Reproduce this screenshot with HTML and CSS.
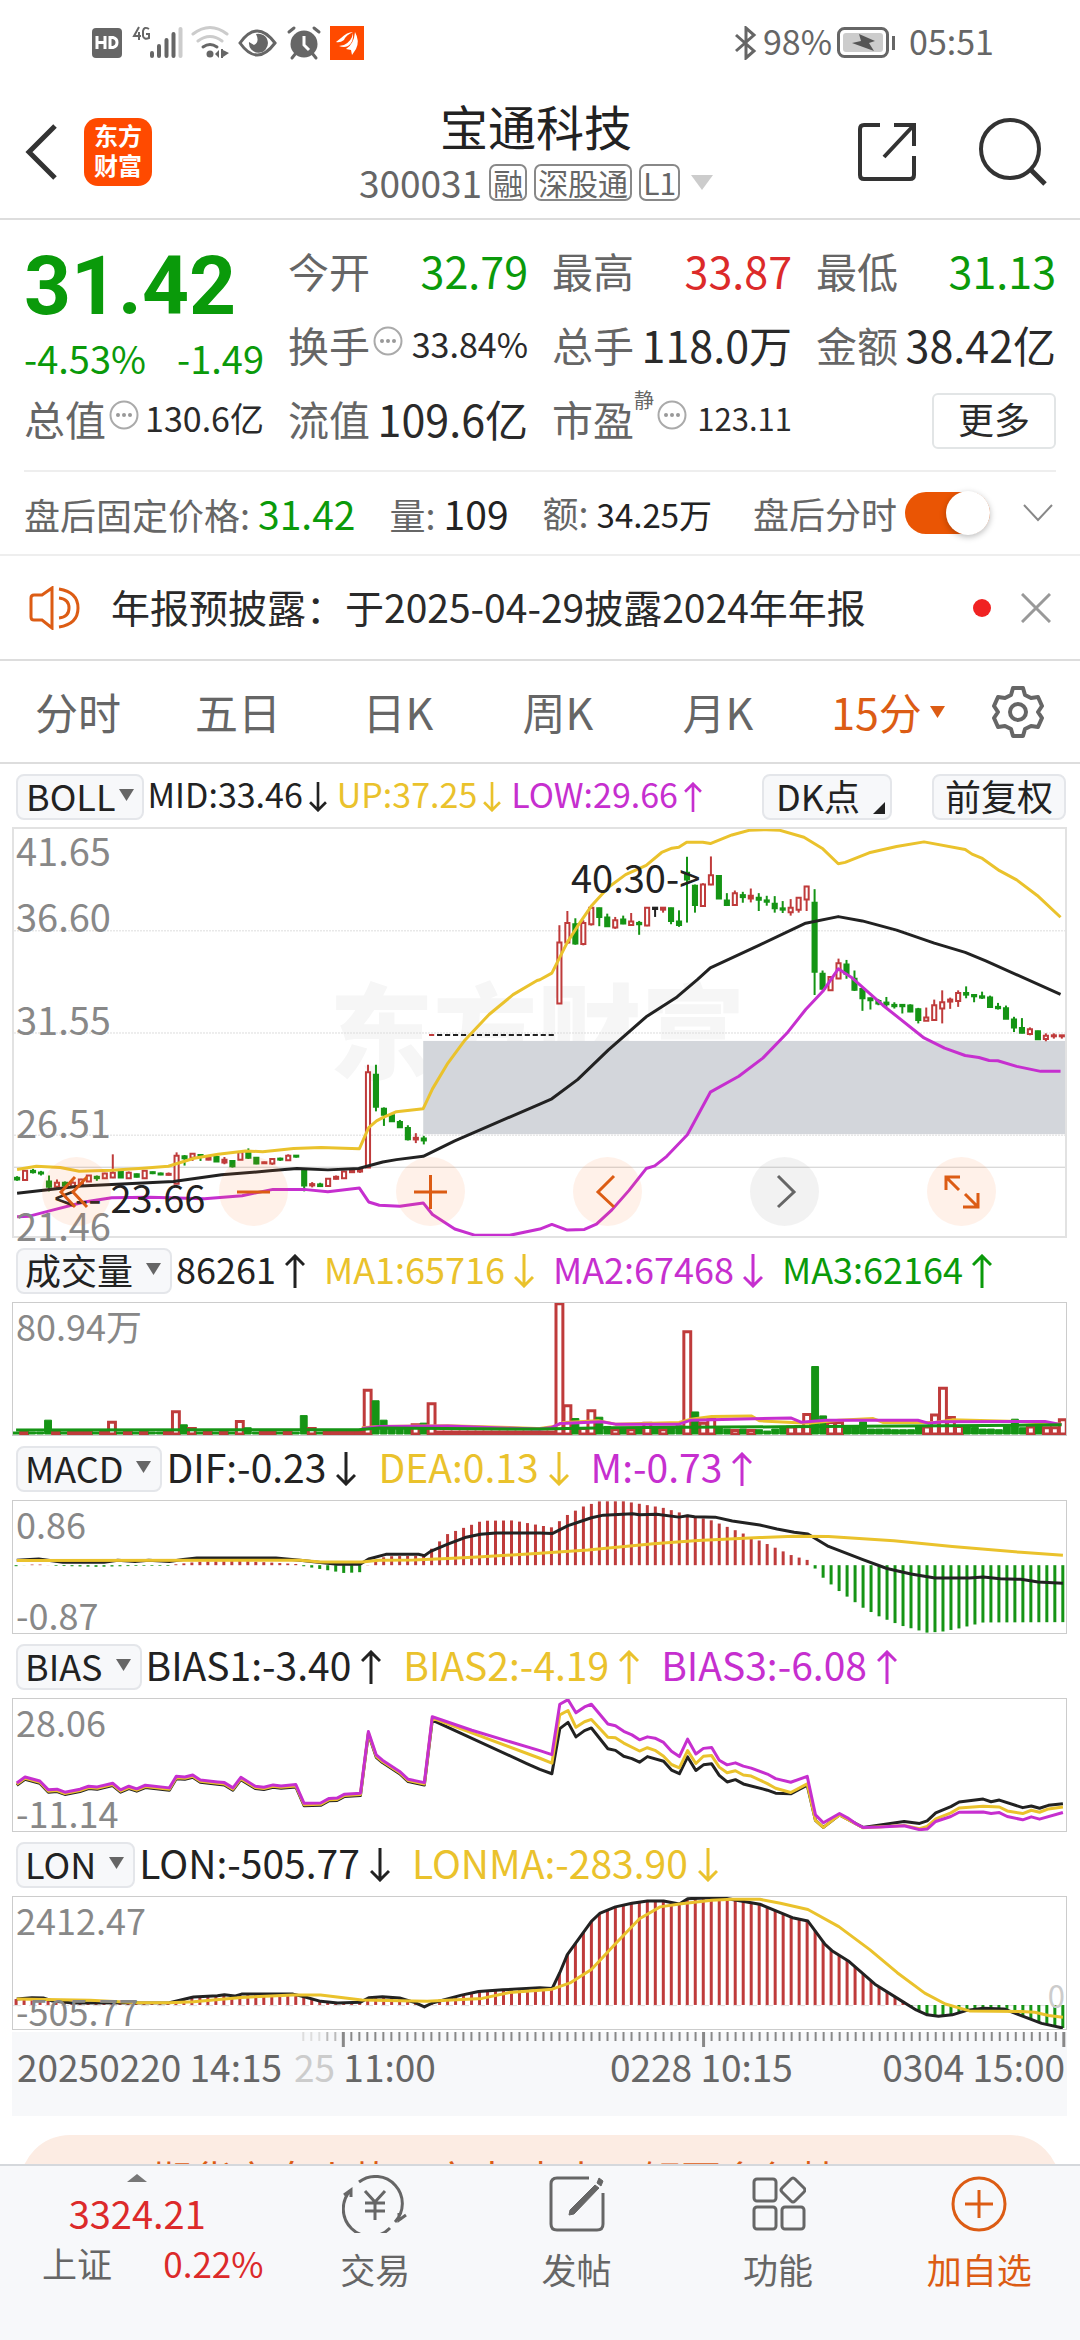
FILE: index.html
```html
<!DOCTYPE html>
<html lang="zh-CN">
<head>
<meta charset="utf-8">
<meta name="viewport" content="width=device-width">
<title>宝通科技 300031</title>
<link rel="stylesheet" href="styles.css">
</head>
<body>
<div class="status">
  <svg class="status-icons" width="274" height="36" viewBox="0 0 274 36" fill="#666">
    <rect x="0" y="3" width="30" height="30" rx="4"/>
    <path d="M5 11v13M13 11v13M5 17.500h8M18 12.500v10h3q4-1 4-5t-4-5z" fill="none" stroke="#fff" stroke-width="3"/>
    <path d="M47 2l-5 9h7M47 7v8M57 4q-5-3-6 2v5q1 4 6 2v-4h-3" fill="none" stroke="#666" stroke-width="2"/>
    <path d="M60 28v3M67 21v10M74.500 15v16M81.500 9v22" stroke="#666" stroke-width="4" stroke-linecap="round"/>
    <path d="M88.500 4v27" stroke="#ccc" stroke-width="4" stroke-linecap="round"/>
    <g fill="none" stroke-width="3" stroke-linecap="round"><path d="M101 9q17-13 34 0M106 16q12-9 24 0" stroke="#ccc"/><path d="M111 22q7-5 14 0" stroke="#666"/></g>
    <circle cx="118" cy="29" r="3.500"/><path d="M123 29l4-4v8zM131 25l6 3-6 4zM129 24h2v9h-2z"/>
    <path d="M148 18q17-24 35 0q-18 24-35 0z" fill="none" stroke="#666" stroke-width="3"/><path d="M164 9a9.500 9.500 0 1 1-7 8l5 3q6-3 2-11z"/>
    <circle cx="212" cy="19" r="13.500"/><path d="M212 11v9l5 5" stroke="#fff" stroke-width="3" fill="none"/><path d="M197 7l5-4M227 7l-5-4M200 33l4-5M224 33l-4-5" stroke="#666" stroke-width="3" stroke-linecap="round"/>
    <rect x="238" y="1" width="34" height="34" fill="#ff4a00"/>
    <path d="M244 17l5-4q6-6 12-6-7 3-9 8-4 3-8 2zM247 21l5-1q8-4 9-12 1 9-5 13-4 2-9 0zM254 24q8-5 9-17 5 9 1 17l-4 6-1-5z" fill="#fff"/>
  </svg>
  <div class="status-right">
    <svg width="24" height="34" viewBox="0 0 24 34" fill="none" stroke="#666" stroke-width="3"><path d="M2 9l18 16-8 7V2l8 7L2 25"/></svg>
    <span>98%</span>
    <svg width="60" height="32" viewBox="0 0 60 32"><rect x="1.500" y="1.500" width="49" height="28" rx="6" fill="none" stroke="#666" stroke-width="3"/><rect x="6" y="6" width="40" height="19" rx="3" fill="#ccc"/><path d="M22 7l16 7-6 2 5 8-22-8 9-2z" fill="#555"/><path d="M56.500 9v14" stroke="#666" stroke-width="3"/></svg>
    <span class="clock">05:51</span>
  </div>
</div>

<header class="header">
  <div class="header-left">
    <button class="icon-btn" aria-label="返回"><svg width="34" height="58" viewBox="0 0 34 58" fill="none" stroke="#333" stroke-width="5"><path d="M31 3L5 29l26 26"/></svg></button>
    <a class="logo" href="#"><span>东方</span><span>财富</span></a>
  </div>
  <div class="title">
    <h1>宝通科技</h1>
    <div class="code"><span>300031</span><span class="tag">融</span><span class="tag">深股通</span><span class="tag">L1</span><svg width="22" height="15" viewBox="0 0 22 15"><path d="M0 0h22L11 15z" fill="#ccc"/></svg></div>
  </div>
  <div class="header-actions">
    <button class="icon-btn" aria-label="分享"><svg width="60" height="60" viewBox="0 0 60 60" fill="none" stroke="#333" stroke-width="4"><path d="M22 3H6q-4 0-4 4v46q0 4 4 4h46q4 0 4-4V34M36 3h20v21M56 3L26 35"/></svg></button>
    <button class="icon-btn" aria-label="搜索"><svg width="70" height="70" viewBox="0 0 70 70" fill="none" stroke="#333" stroke-width="4"><circle cx="32" cy="32" r="29"/><path d="M53 53l14 14" stroke-width="5"/></svg></button>
  </div>
</header>

<main class="main">
  <section class="quote">
    <div class="price-cell"><strong class="price">31.42</strong><div class="change"><span>-4.53%</span><span>-1.49</span></div></div>
    <div class="item"><span>今开</span><b class="down">32.79</b></div>
    <div class="item"><span>最高</span><b class="up">33.87</b></div>
    <div class="item"><span>最低</span><b class="down">31.13</b></div>
    <div class="item"><span>换手</span><svg class="more-dot" viewBox="0 0 30 30"><use href="#dots"/></svg><b class="small">33.84%</b></div>
    <div class="item"><span>总手</span><b>118.0万</b></div>
    <div class="item"><span>金额</span><b>38.42亿</b></div>
    <div class="item"><span>总值</span><svg class="more-dot" viewBox="0 0 30 30"><use href="#dots"/></svg><b class="small">130.6亿</b></div>
    <div class="item"><span>流值</span><b>109.6亿</b></div>
    <div class="item"><span>市盈</span><sup>静</sup><svg class="more-dot" viewBox="0 0 30 30"><use href="#dots"/></svg><b class="tiny">123.11</b></div>
    <div class="item item-end"><button class="more">更多</button></div>
  </section>

  <section class="after">
    <span class="pair">盘后固定价格: <b class="down">31.42</b></span>
    <span class="pair">量: <b>109</b></span>
    <span class="pair">额: <b class="small">34.25万</b></span>
    <label class="switch">盘后分时<input type="checkbox" role="switch" checked></label>
    <button class="icon-btn chevron" aria-label="展开"><svg width="30" height="18" viewBox="0 0 30 18" fill="none" stroke="#888" stroke-width="2"><path d="M1 1l14 15L29 1"/></svg></button>
  </section>

  <section class="notice">
    <svg width="52" height="44" viewBox="0 0 52 44" fill="none" stroke="#dc5c14" stroke-width="3"><path d="M2 12q0-3 3-3h8L23 2v40L13 34H5q-3 0-3-3zM30 3q19 3 19 19T30 41M30 12q10 1 10 10t-10 10"/></svg>
    <p>年报预披露：于2025-04-29披露2024年年报</p>
    <i class="dot"></i>
    <button class="icon-btn" aria-label="关闭"><svg width="30" height="30" viewBox="0 0 30 30" stroke="#999" stroke-width="3"><path d="M1 1l28 28M29 1L1 29"/></svg></button>
  </section>

  <nav class="tabs">
    <button>分时</button><button>五日</button><button>日K</button><button>周K</button><button>月K</button>
    <button class="active">15分<svg width="15" height="12" viewBox="0 0 15 12"><path d="M0 0h15L7.500 12z" fill="#dc5c14"/></svg></button>
    <button class="gear" aria-label="设置"><svg width="52" height="52" viewBox="0 0 52 52" fill="none" stroke="#666" stroke-width="4" stroke-linejoin="round"><path d="M21 2h10l2 7 6 3 7-1 4 9-4 6 4 6-4 9-7-1-6 3-2 7H21l-2-7-6-3-7 1-4-9 4-6-4-6 4-9 7 1 6-3z"/><circle cx="26" cy="26" r="8"/></svg></button>
  </nav>

  <div class="charts">
    <div class="bar bar-main">
      <button class="pick tight">BOLL<svg width="15" height="12" viewBox="0 0 15 12"><path d="M0 0h15L7.500 12z" fill="#666"/></svg></button>
      <span>MID:33.46</span><svg class="arrow"><use href="#dn"/></svg>
      <span class="y">UP:37.25</span><svg class="arrow y"><use href="#dn"/></svg>
      <span class="p">LOW:29.66</span><svg class="arrow p"><use href="#upa"/></svg>
      <button class="pick dk">DK点<svg width="12" height="12" viewBox="0 0 12 12"><path d="M12 0v12H0z" fill="#222"/></svg></button>
      <button class="pick adj">前复权</button>
    </div>
    <div class="plot plot-main">
      <span class="watermark">东方财富</span>
      <svg id="kline" viewBox="35 202 3064 1231" preserveAspectRatio="none"></svg>
      <div class="scale"><span>41.65</span><span>36.60</span><span>31.55</span><span>26.51</span><span>21.46</span></div>
      <span class="mark high">40.30-&gt;</span>
      <span class="mark low"><span>&lt;--</span><span>23.66</span></span>
      <div class="controls">
        <button aria-label="最左"><svg viewBox="0 0 69 69"><path d="M33 20L19 35l14 15M45 20L31 35l14 15"/></svg></button>
        <button aria-label="缩小"><svg viewBox="0 0 69 69"><path d="M18 35h33"/></svg></button>
        <button aria-label="放大"><svg viewBox="0 0 69 69"><path d="M18 35h33M34.500 18v34"/></svg></button>
        <button aria-label="左移"><svg viewBox="0 0 69 69"><path d="M41 19L25 35l16 15"/></svg></button>
        <button class="off" aria-label="右移"><svg viewBox="0 0 69 69"><path d="M28 19l16 16-16 15"/></svg></button>
        <button aria-label="全屏"><svg viewBox="0 0 69 69"><path d="M19 33V20h14M20 21l12 12M51 36v14H36M50 49L38 37"/></svg></button>
      </div>
    </div>

    <div class="bar bar-volume">
      <button class="pick">成交量<svg width="15" height="12" viewBox="0 0 15 12"><path d="M0 0h15L7.500 12z" fill="#666"/></svg></button>
      <span>86261</span><svg class="arrow"><use href="#upa"/></svg>
      <span class="y">MA1:65716</span><svg class="arrow y"><use href="#dn"/></svg>
      <span class="p">MA2:67468</span><svg class="arrow p"><use href="#dn"/></svg>
      <span class="g">MA3:62164</span><svg class="arrow g"><use href="#upa"/></svg>
    </div>
    <div class="plot"><svg id="volume" viewBox="35 187 3064 401" preserveAspectRatio="none"></svg><div class="scale"><span>80.94万</span></div></div>

    <div class="bar">
      <button class="pick">MACD<svg width="15" height="12" viewBox="0 0 15 12"><path d="M0 0h15L7.500 12z" fill="#666"/></svg></button>
      <span>DIF:-0.23</span><svg class="arrow"><use href="#dn"/></svg>
      <span class="y">DEA:0.13</span><svg class="arrow y"><use href="#dn"/></svg>
      <span class="p">M:-0.73</span><svg class="arrow p"><use href="#upa"/></svg>
    </div>
    <div class="plot"><svg id="macd" viewBox="35 782 3064 401" preserveAspectRatio="none"></svg><div class="scale"><span>0.86</span><span>-0.87</span></div></div>

    <div class="bar">
      <button class="pick">BIAS<svg width="15" height="12" viewBox="0 0 15 12"><path d="M0 0h15L7.500 12z" fill="#666"/></svg></button>
      <span>BIAS1:-3.40</span><svg class="arrow"><use href="#upa"/></svg>
      <span class="y">BIAS2:-4.19</span><svg class="arrow y"><use href="#upa"/></svg>
      <span class="p">BIAS3:-6.08</span><svg class="arrow p"><use href="#upa"/></svg>
    </div>
    <div class="plot"><svg id="bias" viewBox="35 176 3064 401" preserveAspectRatio="none"></svg><div class="scale"><span>28.06</span><span>-11.14</span></div></div>

    <div class="bar">
      <button class="pick">LON<svg width="15" height="12" viewBox="0 0 15 12"><path d="M0 0h15L7.500 12z" fill="#666"/></svg></button>
      <span>LON:-505.77</span><svg class="arrow"><use href="#dn"/></svg>
      <span class="y">LONMA:-283.90</span><svg class="arrow y"><use href="#dn"/></svg>
    </div>
    <div class="plot"><svg id="lon" viewBox="35 770 3064 401" preserveAspectRatio="none"></svg><div class="scale"><span>2412.47</span><span>-505.77</span></div><span class="zero">0</span></div>

    <div class="axis">
      <svg id="ticks" viewBox="35 0 3064 16" preserveAspectRatio="none"></svg>
      <div class="times"><span>20250220 14:15</span><span class="second"><i>25</i> 11:00</span><span class="third">0228 10:15</span><span class="last">0304 15:00</span></div>
    </div>
  </div>

  <a class="banner" href="#"><span>期货夜盘火热开启中 点击了解更多行情</span></a>
</main>

<nav class="dock">
  <a class="index" href="#">
    <svg width="20" height="8" viewBox="0 0 20 8"><path d="M0 8h20L10 0z" fill="#777"/></svg>
    <b>3324.21</b>
    <span class="index-row"><span>上证</span><b>0.22%</b></span>
  </a>
  <a href="#"><svg width="66" height="58" viewBox="0 0 66 58" fill="none" stroke="#666" stroke-width="3"><path d="M17 7A27 27 0 0 1 53 47M48 53A27 27 0 0 1 9 15M2 20l7-5v7M64 40l-7 5v-7"/><path d="M23 16l10 11 10-11M33 27v18M23 28h20M23 36h20"/></svg><span>交易</span></a>
  <a href="#"><svg width="56" height="58" viewBox="0 0 56 58" fill="none" stroke="#666" stroke-width="3"><path d="M40 3H8Q2 3 2 9v40q0 6 6 6h40q6 0 6-6V18"/><path d="M50 3l4 3-2 5-4-3zM46 10l4 3-25 26-5 1 1-5z" fill="#666" stroke-width="1"/></svg><span>发帖</span></a>
  <a href="#"><svg width="56" height="58" viewBox="0 0 56 58" fill="none" stroke="#666" stroke-width="3"><rect x="4" y="4" width="22" height="22" rx="3"/><rect x="4" y="32" width="22" height="22" rx="3"/><rect x="32" y="32" width="22" height="22" rx="3"/><path d="M41 4q2-2 4 0l9 9q2 2 0 4l-9 9q-2 2-4 0l-9-9q-2-2 0-4z"/></svg><span>功能</span></a>
  <a class="active" href="#"><svg width="58" height="58" viewBox="0 0 58 58" fill="none" stroke="#dc5c14" stroke-width="3"><circle cx="29" cy="29" r="26"/><path d="M15 29h28M29 15v28"/></svg><span>加自选</span></a>
</nav>

<svg class="defs" width="0" height="0">
  <symbol id="dots" viewBox="0 0 30 30"><circle cx="15" cy="15" r="13.500" fill="none" stroke="#aaa" stroke-width="2"/><g fill="#999"><circle cx="9" cy="15" r="2"/><circle cx="15" cy="15" r="2"/><circle cx="21" cy="15" r="2"/></g></symbol>
  <symbol id="dn" viewBox="0 0 20 34"><path d="M10 0v32M1 23l9 9 9-9" fill="none" stroke="currentColor" stroke-width="3"/></symbol>
  <symbol id="upa" viewBox="0 0 20 34"><path d="M10 34V2M1 11l9-9 9 9" fill="none" stroke="currentColor" stroke-width="3"/></symbol>
</svg>
<script src="script.js"></script>
</body>
</html>
```
FILE: styles.css
```css
* { box-sizing: border-box; }
body {
  margin: 0;
  height: 100vh;
  display: flex;
  flex-direction: column;
  background: #fff;
  color: #222;
  font-family: "Noto Sans CJK SC", "Noto Sans", sans-serif;
  overflow: hidden;
}
button { border: 0; padding: 0; margin: 0; background: none; font: inherit; color: inherit; line-height: 1; }
a { color: inherit; text-decoration: none; }
svg { display: block; flex: none; }
b, i { font-weight: 400; font-style: normal; }
.defs { position: absolute; }
.up { color: #dc2a2a; }
.down { color: #0a9a0a; }

.status { height: 86px; padding: 0 86px 0 92px; display: flex; align-items: center; justify-content: space-between; color: #666; flex: none; }
.status-right { display: flex; align-items: center; gap: 5px; font-size: 34px; line-height: 36px; }
.status-right span { padding-bottom: 4px; }
.status-right .clock { margin-left: 7px; }

.header { height: 134px; padding: 0 32px 0 24px; display: grid; grid-template-columns: 1fr auto 1fr; align-items: center; border-bottom: 2px solid #ddd; flex: none; }
.header-left { display: flex; align-items: center; gap: 26px; }
.logo { width: 68px; height: 68px; border-radius: 14px; background: #ff4a00; color: #fff; font-size: 24px; line-height: 30px; font-weight: 700; text-align: center; padding-top: 2px; display: flex; flex-direction: column; }
.title { text-align: center; }
h1 { margin: 0; font-size: 48px; line-height: 60px; font-weight: 400; }
.code { display: flex; align-items: center; gap: 7px; font-size: 37px; line-height: 54px; color: #666; }
.tag { border: 2px solid #888; border-radius: 7px; padding: 0 2px; font-size: 30px; line-height: 33px; }
.code svg { margin-left: 4px; }
.header-actions { justify-self: end; display: flex; align-items: center; gap: 60px; }
.icon-btn { display: flex; align-items: center; }

.main { flex: 1; min-height: 0; overflow: hidden; }

.quote { margin: 0 24px; padding: 16px 0 12px; display: grid; grid-template-columns: repeat(4, 1fr); grid-template-rows: repeat(3, 74px); column-gap: 24px; border-bottom: 2px solid #eee; }
.price-cell { grid-row: 1 / 3; color: #0a9a0a; }
.price { display: block; font-family: "Roboto", "Noto Sans", sans-serif; font-size: 82px; line-height: 100px; font-weight: 700; }
.change { display: flex; justify-content: space-between; font-size: 38px; line-height: 44px; }
.item { display: flex; align-items: center; color: #666; font-size: 41px; line-height: 68px; padding-bottom: 6px; }
.item b { margin-left: auto; font-size: 43px; color: #2a2a2a; white-space: nowrap; }
.item b.up { color: #dc2a2a; }
.item b.down { color: #0a9a0a; }
.item b.small { font-size: 34px; }
.item b.tiny { font-size: 31px; }
.more-dot { width: 30px; height: 30px; margin: -6px 0 0 3px; }
sup { font-size: 20px; line-height: 20px; align-self: flex-start; margin-top: 6px; }
.item-end { justify-content: flex-end; padding-bottom: 0; }
.more { width: 124px; height: 56px; border: 2px solid #e2e5e6; border-radius: 6px; font-size: 36px; color: #2a2a2a; padding-bottom: 6px; }

.after { height: 84px; padding: 0 27px 0 24px; display: flex; align-items: center; color: #666; font-size: 36px; line-height: 80px; border-bottom: 2px solid #eee; white-space: nowrap; }
.pair { margin-right: 34px; }
.pair b { font-size: 39px; color: #222; }
.pair b.down { color: #0a9a0a; }
.pair b.small { font-size: 33px; }
.switch { margin-left: auto; display: flex; align-items: center; gap: 8px; }
.switch input { appearance: none; margin: 0; width: 85px; height: 42px; border-radius: 21px; background: #ea5504; display: flex; justify-content: flex-end; align-items: center; }
.switch input::before { content: ""; width: 44px; height: 44px; border-radius: 50%; background: #fff; box-shadow: 0 2px 6px #0004; }
.chevron { margin-left: 33px; }

.notice { height: 105px; padding: 0 29px; display: flex; align-items: center; border-bottom: 2px solid #ddd; }
.notice p { margin: 0 auto 0 30px; padding-bottom: 4px; font-size: 39px; line-height: 56px; color: #2a2a2a; }
.dot { width: 18px; height: 18px; border-radius: 50%; background: #f02222; margin-right: 30px; }

.tabs { height: 103px; display: grid; grid-template-columns: repeat(6, 160fr) 120fr; border-bottom: 2px solid #ddd; font-size: 43px; color: #666; }
.tabs button { display: flex; align-items: center; justify-content: center; gap: 8px; padding-right: 4px; }
.tabs .active { color: #dc5c14; padding-left: 20px; }

.charts { padding: 0 13px 0 12px; }
.bar { height: 64px; padding: 10px 0 8px 4px; display: flex; align-items: center; font-size: 39px; line-height: 40px; white-space: nowrap; }
.bar > span { padding-bottom: 6px; }
.bar-main { height: 63px; font-size: 34px; }
.bar-volume { font-size: 36px; }
.pick { height: 46px; padding: 0 9px 4px 7px; display: flex; align-items: center; gap: 13px; background: #f7f8fa; border: 2px solid #e4e6ea; border-radius: 8px; font-size: 36px; margin-right: 4px; }
.pick.tight { gap: 4px; padding: 0 8px 4px; margin-right: 3px; }
.pick.dk { margin-left: auto; margin-right: 40px; padding: 0 5px 4px 12px; }
.pick.dk svg { align-self: flex-end; }
.pick.adj { margin-right: 1px; padding: 0 11px 4px; }
.arrow { width: 20px; height: 34px; margin: 0 22px 0 10px; }
.bar-volume .arrow { margin: 0 19px 0 9px; }
.bar-main .arrow { width: 18px; height: 30px; margin: 0 10px 0 6px; }
.y { color: #eac22c; }
.p { color: #c62fcf; }
.g { color: #0a9a0a; }
.plot { position: relative; height: 134px; border: 1px solid #ccc; }
.plot > svg { position: relative; width: 100%; height: 100%; }
.plot-main { height: 411px; border: 2px solid #e2e2e2; }
.scale { position: absolute; inset: 2px auto -1px 3px; display: flex; flex-direction: column; justify-content: space-between; color: #888; font-size: 36px; line-height: 40px; }
.plot-main .scale { inset: 1px auto auto 2px; font-size: 38px; justify-content: flex-start; gap: 63px; }
.plot-main .scale span:first-child { margin-bottom: -37px; }
.watermark { position: absolute; left: 30%; top: 138px; font-size: 104px; line-height: 120px; font-weight: 900; color: #f6f6f6; }
.mark { position: absolute; font-size: 38px; line-height: 40px; }
.high { left: 53%; top: 28px; }
.low { left: 40px; top: 348px; display: flex; gap: 9px; }
.controls { position: absolute; left: 28px; right: 69px; bottom: 10px; display: flex; justify-content: space-between; }
.controls button { width: 69px; height: 69px; border-radius: 50%; background: #ff73261a; }
.controls path { fill: none; stroke: #dc5c14; stroke-width: 3; }
.controls .off { background: #8888881c; }
.controls .off path { stroke: #666; }
.zero { position: absolute; right: 1px; top: 80px; color: #ccc; font-size: 31px; line-height: 36px; }
.axis { margin-top: 2px; height: 84px; background: #f7f8fa; }
.axis > svg { width: 100%; height: 16px; }
.times { position: relative; height: 44px; color: #666; font-size: 37px; line-height: 36px; padding-left: 5px; }
.times .second, .times .third, .times .last { position: absolute; top: 0; }
.second { left: 282px; }
.second i { color: #ccc; }
.third { left: 598px; }
.last { right: 2px; }

.banner { display: block; margin: 19px 20px 0; height: 120px; border-radius: 50px; background: #fcece3; color: #dc5c14; font-size: 40px; line-height: 46px; padding: 20px 0 0 132px; }

.dock { flex: none; height: 176px; display: grid; grid-template-columns: 274fr repeat(4, 201fr); background: #f7f8fa; border-top: 2px solid #d5d8dc; color: #666; font-size: 35px; }
.dock a { display: flex; flex-direction: column; align-items: center; padding-top: 9px; line-height: 46px; gap: 13px; }
.dock .active { color: #dc5c14; }
.dock .index { gap: 0; padding-top: 8px; }
.dock b { color: #dc2a2a; }
.dock .index > b { font-size: 38px; line-height: 46px; margin-top: 8px; }
.index-row { display: flex; justify-content: space-between; width: 100%; padding: 0 11px 0 42px; line-height: 50px; margin-top: 2px; }
```
FILE: script.js
```js
const NS = 'http://www.w3.org/2000/svg';
const RED = '#bf3b3b', GREEN = '#159415', BLACK = '#222', YELLOW = '#eac22c', PURPLE = '#c62fcf';
const HALF = 1568;                    // the second half of a series starts here
const xAt = i => 44 + 23.25 * i;      // centre of bar i

function add(id, tag, attrs) {
  const el = document.createElementNS(NS, tag);
  for (const k in attrs) el.setAttribute(k, attrs[k]);
  el.setAttribute('vector-effect', 'non-scaling-stroke');
  document.getElementById(id).append(el);
}
function series(a, b) {
  const read = (s, dx) => s.trim().split(/\s+/).map(p => { const [x, y] = p.split(',').map(Number); return [x + dx, y]; });
  return read(a, 0).concat(read(b, HALF));
}
function line(id, pts, stroke, width = 3) {
  add(id, 'polyline', { points: pts.map(p => p.join(',')).join(' '), fill: 'none', stroke, 'stroke-width': width, 'stroke-linejoin': 'round' });
}
function valueAt(pts, x) {
  for (let k = 1; k < pts.length; k++) {
    const [x0, y0] = pts[k - 1], [x1, y1] = pts[k];
    if (x <= x1) return x1 === x0 ? y1 : y0 + (y1 - y0) * Math.max(0, x - x0) / (x1 - x0);
  }
  return pts[pts.length - 1][1];
}
function stick(id, x, y0, y1, stroke, width = 2) {
  add(id, 'line', { x1: x, x2: x, y1: y0, y2: y1, stroke, 'stroke-width': width });
}

/* K line */
for (const y of [510, 819, 1128]) add('kline', 'line', { x1: 35, x2: 3099, y1: y, y2: y, stroke: '#ddd', 'stroke-width': 1, 'stroke-dasharray': '2 1' });
add('kline', 'line', { x1: 35, x2: 3099, y1: 1225, y2: 1225, stroke: '#ccc', 'stroke-width': 1 });
add('kline', 'rect', { x: 1228, y: 843, width: 1871, height: 282, fill: '#d3d6db' });

// index colour high bodyTop bodyBottom low
const candles = `0g 1252 1257 1262 1266;1r 1236 1236 1264 1264;2g 1230 1236 1240 1244;3g 1236 1241 1244 1250;4g 1250 1268 1284 1298;5r 1262 1272 1284 1290;6g 1268 1272 1280 1284;7r 1268 1272 1284 1286;8r 1260 1262 1280 1282;9r 1250 1250 1268 1268;10g 1250 1254 1258 1266;11r 1242 1244 1258 1258;12r 1186 1242 1256 1258;13g 1236 1236 1256 1256;14r 1238 1242 1258 1258;15g 1244 1246 1254 1256;16r 1236 1236 1258 1258;17g 1238 1240 1243 1246;18g 1241 1244 1247 1249;19r 1241 1245 1248 1250;20r 1180 1190 1275 1275;21g 1188 1192 1198 1220;22r 1184 1184 1196 1206;23g 1186 1188 1193 1206;24r 1192 1197 1202 1204;25g 1190 1194 1208 1208;26r 1194 1202 1211 1216;27g 1206 1206 1222 1226;28r 1176 1180 1202 1202;29g 1168 1178 1196 1200;30g 1194 1196 1214 1216;31r 1208 1210 1213 1215;32r 1198 1200 1214 1218;33g 1196 1199 1202 1206;34r 1186 1190 1204 1206;35g 1189 1190 1193 1196;36g 1230 1234 1280 1298;37r 1270 1276 1280 1286;38g 1272 1277 1282 1284;39r 1258 1260 1282 1282;40r 1250 1254 1260 1262;41r 1236 1238 1258 1260;42r 1232 1234 1240 1242;43r 1230 1233 1238 1242;44r 915 938 1226 1226;45g 915 945 1042 1056;46g 1044 1048 1066 1100;47g 1064 1068 1086 1088;48g 1082 1088 1104 1106;49g 1098 1106 1140 1144;50r 1122 1136 1141 1152;51g 1130 1138 1144 1156;
68r 493 545 730 730;69r 450 486 545 550;70g 472 490 548 552;71r 478 486 550 554;72r 438 440 490 494;73g 440 442 468 496;74g 458 470 496 498;75r 468 478 500 504;76g 464 476 488 490;77r 456 482 492 494;78g 480 486 490 522;79r 438 440 494 496;80k 440 440 444 468;81r 440 440 446 455;82g 440 442 480 490;83g 448 482 492 498;84g 286 334 355 485;85g 370 374 432 455;86r 366 370 435 435;87r 285 342 370 372;88g 342 344 412 412;89g 396 418 432 435;90r 388 396 432 434;91g 392 402 408 425;92r 382 404 412 424;93g 396 410 416 450;94g 404 418 422 434;95g 405 428 442 455;96g 420 442 446 456;97r 414 440 454 464;98r 408 410 446 455;99r 374 376 415 450;100g 384 425 634 704;101g 630 640 685 688;102r 648 650 690 690;103r 594 608 654 656;104g 598 612 640 655;105g 630 655 688 692;106g 680 686 714 752;107g 712 714 720 748;108g 716 722 730 735;109g 710 727 732 740;110g 726 734 738 745;111g 734 734 738 760;112g 732 736 754 756;113g 743 747 780 790;114r 742 772 782 782;115r 718 735 780 782;116r 690 726 745 790;117r 712 718 724 746;118r 690 698 722 740;119g 678 698 703 714;120g 704 704 708 726;121g 694 708 712 716;122g 706 712 740 742;123g 728 740 744 748;124g 736 744 776 776;125g 770 778 802 816;126g 774 804 818 820;127r 802 808 822 826;128g 812 814 838 838;129r 820 827 837 844;130r 820 826 829 836;131r 826 826 829 836`;
for (const row of candles.split(';')) {
  const [head, hi, top, bot, lo] = row.trim().split(' ');
  const x = xAt(parseInt(head)), kind = head.slice(-1);
  const colour = { r: RED, g: GREEN, k: BLACK }[kind];
  stick('kline', x, hi, top, colour);
  stick('kline', x, bot, lo, colour);
  add('kline', 'rect', { x: x - 6, y: top, width: 12, height: bot - top, fill: kind === 'r' && bot - top > 9 ? '#fff' : colour, stroke: colour, 'stroke-width': 2 });
}
for (let i = 52; i < 68; i++) add('kline', 'line', { x1: xAt(i) - 8, x2: xAt(i) + 7, y1: 825, y2: 825, stroke: i === 52 ? RED : BLACK, 'stroke-width': 2 });

line('kline', series('44,1232 100,1222 170,1226 225,1237 320,1234 410,1228 485,1222 560,1198 630,1186 710,1176 760,1178 850,1168 930,1165 1042,1169 1069,1105 1092,1085 1110,1075 1150,1057 1228,1048 1255,988 1300,910 1350,840 1420,763 1490,703 1560,660',
  '0,658 35,638 80,545 110,496 150,435 200,378 250,340 310,312 355,273 385,260 405,257 428,242 475,242 497,246 560,220 610,206 660,204 700,206 770,227 825,262 870,307 890,303 960,274 1040,255 1120,241 1240,264 1260,278 1290,291 1340,328 1390,356 1450,403 1518,469'), YELLOW);
line('kline', series('44,1304 230,1282 500,1268 640,1248 780,1236 860,1229 950,1233 1040,1229 1110,1209 1150,1202 1228,1192 1320,1145',
  '0,1034 35,1018 110,960 200,870 310,770 400,710 460,657 497,622 640,553 775,487 870,467 940,480 1040,508 1150,547 1240,575 1300,601 1518,702'), BLACK);
line('kline', series('44,1375 80,1373 150,1354 240,1330 320,1317 430,1316 590,1320 700,1311 790,1292 880,1292 950,1299 1042,1288 1069,1330 1100,1340 1160,1343 1228,1333 1255,1368 1320,1412 1380,1431 1480,1431',
  '0,1412 35,1398 80,1415 130,1413 165,1397 210,1354 260,1295 310,1229 335,1221 370,1192 430,1127 497,998 580,950 650,895 720,820 775,748 825,693 870,625 910,652 1000,735 1120,834 1180,865 1240,887 1280,893 1310,902 1335,903 1390,920 1460,935 1518,935'), PURPLE);

/* Volume */
const kinds = {};
candles.split(';').forEach(r => { const h = r.trim().split(' ')[0]; kinds[parseInt(h)] = h.slice(-1); });
kinds[84] = 'r';
const tops = { 4: 543, 12: 549, 20: 517, 21: 557, 22: 568, 28: 547, 29: 566, 36: 529, 37: 568, 44: 452, 45: 484, 46: 543, 47: 566, 48: 568, 49: 566, 50: 557, 51: 552, 52: 493, 68: 189, 69: 499, 70: 538, 71: 568, 72: 514, 73: 534, 74: 562, 75: 572, 76: 566, 77: 572, 78: 566, 79: 552, 80: 566, 81: 572, 82: 566, 83: 560, 84: 274, 85: 518, 86: 552, 87: 540, 88: 568, 89: 570, 90: 574, 91: 570, 92: 574, 93: 572, 94: 576, 95: 570, 96: 562, 97: 564, 98: 562, 99: 526, 100: 380, 101: 530, 102: 550, 103: 550, 104: 560, 105: 560, 106: 548, 107: 570, 108: 570, 109: 570, 110: 572, 111: 572, 112: 572, 113: 562, 114: 564, 115: 527, 116: 446, 117: 535, 118: 562, 119: 562, 120: 565, 121: 570, 122: 570, 123: 572, 124: 562, 125: 540, 126: 566, 127: 564, 128: 562, 129: 566, 130: 566, 131: 542 };
for (let i = 0; i < 132; i++) {
  const x = xAt(i), y = tops[i] || 579, red = (kinds[i] || 'r') === 'r';
  const colour = red ? RED : GREEN;
  add('volume', 'rect', { x: x - 10, y, width: 20, height: 585 - y, fill: red ? '#fff' : colour, stroke: colour, 'stroke-width': red ? 3 : 1 });
}
line('volume', series('1050,566 1100,562 1300,560 1560,568', '0,568 40,562 70,550 170,545 220,555 405,550 440,540 500,532 615,530 640,545 780,552 870,543 970,538 1000,550 1150,550 1200,542 1400,547 1518,555'), YELLOW);
line('volume', series('1050,568 1100,562 1300,561 1560,570', '0,570 35,565 60,553 180,548 220,555 405,555 440,543 730,536 760,549 830,543 1100,543 1130,552 1170,548 1470,547 1518,557'), PURPLE);
line('volume', series('44,573 1040,572 1100,567', '0,570 200,566 700,563 1050,561 1300,559 1518,557'), GREEN);

/* MACD */
const hist = series('44,980 60,978 90,975 120,975 160,979 280,982 400,979 490,979 510,974 580,966 700,964 870,974 880,980 1000,1001 1048,998 1070,973 1120,950 1232,948 1255,925 1300,882 1400,842 1490,841',
  '0,856 34,862 82,823 128,798 174,783 245,783 270,787 360,803 430,824 500,841 590,880 660,912 735,948 778,961 800,986 825,1016 870,1055 940,1106 990,1134 1050,1160 1127,1182 1170,1179 1220,1169 1290,1151 1522,1150');
for (let i = 0; i < 132; i++) {
  const y = valueAt(hist, xAt(i));
  stick('macd', xAt(i), 977, y, y < 977 ? RED : GREEN, 3);
}
line('macd', series('46,962 110,958 180,968 300,968 340,962 390,966 430,962 490,966 530,960 570,955 800,955 870,962 950,971 980,974 1045,974 1070,958 1120,944 1215,944 1232,948 1250,935 1300,913 1350,893 1395,883 1440,879',
  '0,879 36,881 82,857 150,833 185,825 270,821 290,824 340,822 405,831 430,827 450,830 510,831 560,843 640,855 690,867 740,877 780,882 840,920 940,960 1010,987 1080,1004 1150,1016 1250,1016 1290,1013 1340,1018 1400,1020 1450,1028 1522,1032'), BLACK);
line('macd', series('46,963 870,962 930,967 1050,967 1100,962 1200,961 1300,957 1400,951', '0,941 140,931 330,912 460,902 640,893 740,889 840,890 1030,903 1200,920 1400,938 1522,947'), YELLOW);

/* BIAS */
const early = '46,431 70,413 113,425 138,452 163,450 186,459 230,450 255,441 280,443 325,432 348,452 372,441 395,449 420,438 490,446 510,411 535,413 558,407 580,422 630,428 650,430 675,446 698,414 740,441 765,444 792,437 815,440 858,436 882,493 930,492 955,478 978,477 1000,465 1046,462 1069,275 1092,346 1110,362 1160,396 1185,420 1232,430';
const shifted = d => early.split(' ').map(p => { const [x, y] = p.split(','); return x + ',' + (Number(y) + d); }).join(' ');
line('bias', series(shifted(7) + ' 1255,240 1530,372', '0,390 35,403 58,266 82,247 105,291 130,272 150,264 198,327 220,332 244,350 268,357 290,368 313,351 360,365 383,392 406,403 430,352 454,393 476,376 500,373 522,408 545,428 569,421 592,434 662,453 686,462 730,464 778,438 802,545 825,566 872,528 940,566 1060,548 1105,554 1127,546 1152,522 1196,503 1220,489 1290,480 1313,488 1337,483 1405,506 1430,501 1454,508 1480,499 1522,494'), BLACK);
line('bias', series(shifted(4) + ' 1255,234', '0,356 35,371 58,224 82,211 105,262 130,245 150,238 198,292 220,294 244,310 290,334 313,324 335,332 360,350 383,375 406,385 430,333 454,372 476,350 500,348 522,383 545,400 569,394 592,407 615,410 662,433 686,447 730,460 778,434 802,545 825,566 872,528 940,567 1060,560 1105,570 1127,563 1152,540 1196,522 1220,507 1290,502 1337,504 1360,516 1405,524 1430,514 1454,520 1480,510 1522,504'), YELLOW);
line('bias', series(shifted(0) + ' 1255,230 1370,271', '0,333 35,345 58,192 82,178 105,218 130,200 150,192 198,252 220,257 244,274 268,285 290,300 313,291 335,295 360,308 383,335 406,351 430,298 454,343 476,326 500,323 522,362 545,376 569,370 592,380 615,386 662,404 686,418 730,429 778,411 802,528 825,552 872,524 895,537 920,555 940,566 990,565 1060,561 1105,573 1127,571 1152,548 1196,533 1220,520 1290,519 1313,524 1337,521 1360,533 1405,543 1430,534 1454,541 1522,521'), PURPLE);

/* LON */
const lon = series('46,1080 90,1076 125,1077 150,1086 210,1092 490,1091 560,1074 630,1070 650,1067 680,1071 700,1065 850,1065 885,1074 930,1087 980,1092 1045,1090 1070,1076 1110,1073 1160,1077 1205,1091 1232,1104 1255,1092 1340,1068 1390,1057 1460,1052',
  '0,1046 36,1048 58,1000 80,945 150,844 174,820 220,800 268,789 313,782 360,782 406,791 430,775 500,772 530,772 640,792 735,833 780,843 830,914 850,933 900,966 975,1035 1050,1084 1095,1113 1127,1128 1160,1132 1200,1128 1240,1115 1290,1108 1350,1110 1420,1138 1460,1154 1522,1168');
add('lon', 'line', { x1: 35, x2: 3099, y1: 1100, y2: 1100, stroke: '#ddd', 'stroke-width': 1, 'stroke-dasharray': '8 8' });
for (let i = 0; i < 132; i++) {
  const y = valueAt(lon, xAt(i));
  stick('lon', xAt(i), 1098, y, y < 1098 ? RED : GREEN, 3);
}
line('lon', lon, BLACK);
line('lon', series('46,1080 260,1084 400,1091 490,1091 560,1088 700,1075 850,1068 930,1068 1050,1083 1240,1087 1400,1078 1480,1060',
  '0,1053 36,1050 90,1030 150,990 220,912 290,836 350,800 406,791 500,780 560,777 640,777 700,789 780,808 870,860 960,930 1040,1000 1120,1062 1180,1095 1250,1116 1400,1118 1440,1120 1480,1130 1522,1135'), YELLOW);

/* Time axis */
for (let i = 36; i < 132; i++) {
  const major = [41, 86, 131].includes(i);
  stick('ticks', xAt(i), 0, major ? 15 : 9, i < 39 ? '#ddd' : i < 41 ? '#bbb' : '#888', major ? 3 : 2);
}
```
